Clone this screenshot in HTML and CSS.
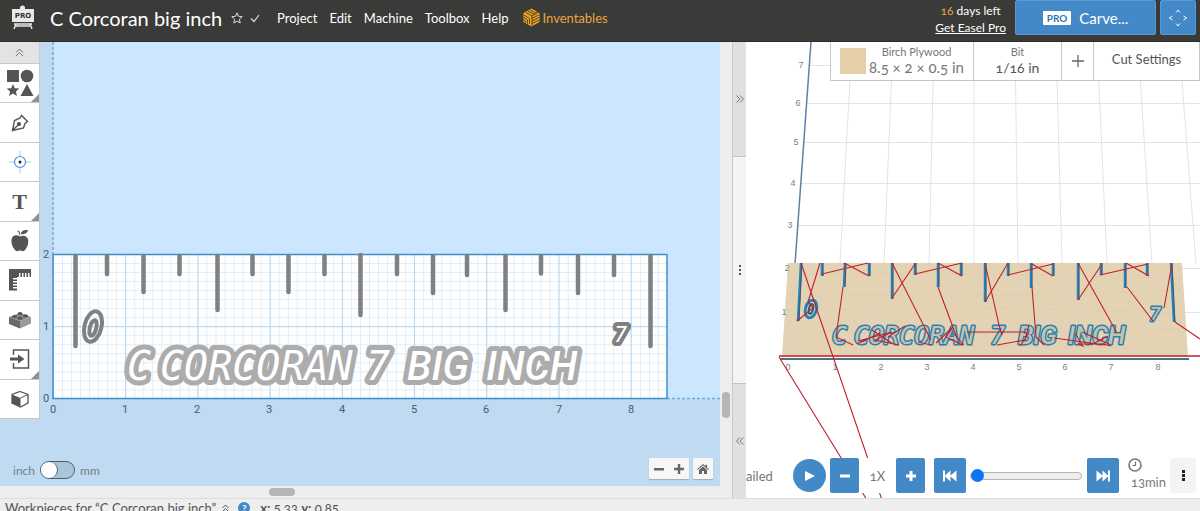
FILE: index.html
```html
<!DOCTYPE html>
<html lang="en">
<head>
<meta charset="utf-8">
<title>C Corcoran big inch</title>
<link rel="stylesheet" href="styles.css">
</head>
<body>
<header class="header">
  <svg class="logo" width="24" height="26" viewBox="0 0 24 26" role="img" aria-label="Pro">
    <path d="M9 4V2.500A2.500 2 0 0 1 14 2.500V4z" fill="#e8e8e8"/>
    <rect x="1" y="4" width="22" height="13" fill="#e8e8e8"/>
    <text class="logo-text" x="12" y="13">PRO</text>
    <path d="M3 19H21M5 19L3 24M19 19L21 24M5 21H19" stroke="#e8e8e8" stroke-width="1.500" fill="none"/>
  </svg>
  <h1 class="title">C Corcoran big inch</h1>
  <svg class="star" width="12" height="12" viewBox="0 0 12 12" fill="none" stroke="#ddd"><path d="M6 .9L7.500 4.300L11.200 4.700L8.400 7.200L9.200 11L6 9.100L2.800 11L3.600 7.200L.8 4.700L4.500 4.300Z"/></svg>
  <svg class="check" width="10" height="12" viewBox="0 0 10 12" fill="none" stroke="#ddd" stroke-width="1.200"><path d="M1 6.500L4 9.500L9 3"/></svg>
  <nav class="menu">
    <a href="#project">Project</a><a href="#edit">Edit</a><a href="#machine">Machine</a><a href="#toolbox">Toolbox</a><a href="#help">Help</a>
    <a href="#inventables" class="brand">
      <svg width="17" height="19" viewBox="0 0 17 19"><path d="M8.500 .5L16.500 5V14L8.500 18.500L.5 14V5Z" fill="#eba321"/><path d="M3 4.500L9 8L16 4M5 3.200L10 6L14 3.700M7 2L11 4.300M9 8V18M9 10.500L16 6.800M9 13L16 9.500M9 15.500L16 12M1 7L6.500 10.500V16M1 9.500L4.500 12V15.500M1 12L2.500 13V14.500" fill="none" stroke="#4a3c20" stroke-width=".9"/></svg>
      Inventables</a>
  </nav>
  <div class="trial"><div><span class="days">16</span> days left</div><a href="#pro">Get Easel Pro</a></div>
  <button class="carve"><span class="pro">PRO</span>Carve...</button>
  <button class="jog" aria-label="Jog machine"><svg width="18" height="18" viewBox="0 0 18 18" fill="none" stroke="#fff"><path d="M7 3.500L9 1L11 3.500M7 14.500L9 17L11 14.500M3.500 7L.5 9L3.500 11M14.500 7L17.500 9L14.500 11"/></svg></button>
</header>

<main class="workspace">
  <section class="editor">
    <svg class="scene" role="img" aria-label="Ruler design">
      <defs>
        <pattern id="fine" x="53" y="254" width="9.030" height="9.030" patternUnits="userSpaceOnUse"><path d="M0 0V9.030M0 0H9.030" stroke="#d9e7f1" stroke-width="1.400"/></pattern>
        <pattern id="inch" x="53" y="254" width="72.200" height="72.200" patternUnits="userSpaceOnUse"><path d="M0 0V72.200M0 0H72.200" stroke="#b4d7f3" stroke-width="2"/></pattern>
      </defs>
      <g transform="translate(0 -42)">
        <rect x="53" y="42" width="100%" height="357" fill="#cce6ff"/>
        <path d="M53 42V254M667 398.500H1600" stroke="#71addc" stroke-width="1.500" stroke-dasharray="3 2"/>
        <rect x="53" y="254" width="614" height="144" fill="#fdfeff"/>
        <rect x="53" y="254" width="614" height="144" fill="url(#fine)"/>
        <rect x="53" y="254" width="614" height="144" fill="url(#inch)"/>
        <rect x="53" y="254.500" width="614" height="144" fill="none" stroke="#438dc7" stroke-width="1.500"/>
        <path class="ticks" d="M75.500 256V346M107 256V274M143.500 256V292M179.500 256V274M217.500 256V310M252.500 256V274M288.500 256V292M324.500 256V274M360.500 255V315M397 256V274M433 256V293M467 256V275M505.500 256V310M541 256V273.500M578 256V293M614 256V275M650.500 256V346"/>
        <g class="lettering">
          <text x="127" y="380">C</text><text x="160" y="380">CORCORAN</text><text x="366" y="380">7</text><text class="narrow" x="407" y="380">BIG</text><text class="narrow" x="486" y="380">INCH</text>
        </g>
        <g class="digits">
          <ellipse cx="93" cy="326.500" rx="8.500" ry="15.500" transform="rotate(14 93 326.500)"/>
          <ellipse cx="93" cy="328" rx="3.200" ry="8" transform="rotate(14 93 328)"/>
          <text x="614" y="342">7</text>
        </g>
        <g class="axis">
          <text x="46" y="258">2</text><text x="46" y="330">1</text><text x="46" y="402">0</text>
          <text x="53" y="413">0</text><text x="125" y="413">1</text><text x="197" y="413">2</text><text x="269" y="413">3</text><text x="342" y="413">4</text><text x="414" y="413">5</text><text x="486" y="413">6</text><text x="559" y="413">7</text><text x="631" y="413">8</text>
        </g>
      </g>
    </svg>
    <div class="toolbar">
      <button class="collapse" aria-label="Collapse"><svg width="9" height="9" viewBox="0 0 9 9" fill="none" stroke="#777"><path d="M1 4.500L4.500 1L8 4.500M1 8L4.500 4.500L8 8"/></svg></button>
      <button class="more" aria-label="Shapes"><svg width="28" height="28" viewBox="0 0 28 28"><path d="M1 1H13V13H1zM7 15L8.800 19.200L13.300 19.600L9.900 22.500L11 27L7 24.600L3 27L4.100 22.500L.7 19.600L5.200 19.200zM21 15L27.500 27H14.500z"/><circle cx="21" cy="7" r="6.300"/></svg></button>
      <button aria-label="Pen"><svg width="18" height="18" viewBox="0 0 18 18" fill="none" stroke="#555" stroke-width="1.400"><path d="M1.500 16.500L3.500 6.500L9 4L10.500 1.500L16.500 7.500L14 9.500L12.500 14ZM2 16L7.500 10.500"/><circle cx="8" cy="10" r="1.400" fill="#555"/></svg></button>
      <button aria-label="Drill point"><svg width="22" height="22" viewBox="0 0 22 22" fill="none"><path d="M11 0V5M11 17V22M0 11H5M17 11H22" stroke="#a9c9e9"/><circle cx="11" cy="11" r="5.500" stroke="#4a90e0" stroke-width="1.200"/><circle cx="11" cy="11" r="1.500" fill="#222"/></svg></button>
      <button class="more letter" aria-label="Text">T</button>
      <button aria-label="Apps"><svg width="20" height="24" viewBox="0 0 22 26"><path d="M11 8C8 6 4 6 2.500 9C.5 13 2 20 6 23.500C8 25 9.500 23.500 11 23.500S14 25 16 23.500C19.500 20.500 21.500 13 19 9.500C17 6.500 13.500 6.700 11 8ZM10.500 7C10.500 5 9.500 3 8 2L9.500 1.500C11 3 11.300 5 11.200 7ZM12 5.500C12 2 15 .5 20 .8C19 4.500 15.500 6 12 5.500Z"/></svg></button>
      <button aria-label="Ruler"><svg width="22" height="22" viewBox="0 0 22 22"><path d="M0 0H22V8H20.500V4H19V8H17.500V4H16V8H14.500V4H13V8H11.500V4H10V8H8V9H4V10.500H8V12H4V13.500H8V15H4V16.500H8V18H4V19.500H8V21.500H0Z"/></svg></button>
      <button aria-label="Bricks"><svg width="22" height="18" viewBox="0 0 22 18"><path d="M0 6L11 2L22 6L11 10Z" fill="#8a8a8a"/><path d="M0 6L11 10V17.500L0 13Z" fill="#6a6a6a"/><path d="M11 10L22 6V12.500L11 17.500Z" fill="#9a9a9a"/><g fill="#555"><ellipse cx="5.500" cy="5.500" rx="2.500" ry="1.500"/><ellipse cx="11" cy="7.300" rx="2.500" ry="1.500"/><ellipse cx="11" cy="2.500" rx="2.500" ry="1.500"/><ellipse cx="16.500" cy="4.800" rx="2.500" ry="1.500"/></g></svg></button>
      <button class="more" aria-label="Import"><svg width="20" height="20" viewBox="0 0 20 20"><path d="M3.500 6V1H18.500V19H3.500V14" fill="none" stroke="#555" stroke-width="1.500"/><path d="M0 8.500H8V5.500L14.500 10L8 14.500V11.500H0z"/></svg></button>
      <button aria-label="Cube"><svg width="18" height="18" viewBox="0 0 18 18"><path d="M9 1.500L17 4.500V13L9.500 17L1 13V4.500Z" fill="#fff" stroke="#555" stroke-width="1.300"/><path d="M1 4.500L9.500 8V17L1 13Z"/><path d="M9.500 8L17 4.500" stroke="#555"/></svg></button>
    </div>
    <div class="units"><label for="unit">inch</label><input id="unit" class="switch" type="checkbox"><label for="unit">mm</label></div>
    <div class="zoom">
      <div class="pair"><button aria-label="Zoom out"><svg width="10" height="10" viewBox="0 0 10 10"><path d="M0 4H10V6.500H0z"/></svg></button><button aria-label="Zoom in"><svg width="10" height="10" viewBox="0 0 10 10"><path d="M0 3.800H3.800V0H6.200V3.800H10V6.200H6.200V10H3.800V6.200H0z"/></svg></button></div>
      <button class="home" aria-label="Home"><svg width="12" height="10" viewBox="0 0 12 10"><path d="M0 5.200L6 0L8.500 2.200V.8H10V3.500L12 5.200L11.300 6L6 1.500L.7 6ZM2 6L6 2.600L10 6V10H7V7H5V10H2Z"/></svg></button>
    </div>
  </section>
  <div class="vscroll"><div class="vthumb"></div></div>
  <div class="hscroll"><div class="hthumb"></div></div>
  <div class="splitter">
    <button aria-label="Expand design"><svg width="8" height="8" viewBox="0 0 8 8" fill="none" stroke="#777"><path d="M.5 .5L4 4L.5 7.500M4 .5L7.500 4L4 7.500"/></svg></button>
    <div class="grip"><i></i><i></i><i></i></div>
    <button aria-label="Expand preview"><svg width="8" height="8" viewBox="0 0 8 8" fill="none" stroke="#777"><path d="M4 .5L.5 4L4 7.500M7.500 .5L4 4L7.500 7.500"/></svg></button>
  </div>
  <section class="preview">
    <svg class="scene" role="img" aria-label="Toolpath preview">
      <g transform="translate(-746 -42)" fill="none">
        <path stroke="#dce5f2" d="M852 42L840 264M893 42L884 264M934 42L929 264M974 42L974 264M1015 42L1018 264M1056 42L1062 264M1097 42L1107 264M1138 42L1152 264M1179 42L1196 264M809 65.500H1200M807 103.500H1200M804 142.500H1200M801 183.500H1200M798 225.500H1200M1182 268.500H1200M1185 312.500H1200"/>
        <path stroke="#5b82a8" stroke-width="1.500" d="M811 42L795 264"/>
        <path fill="#e4d2b4" d="M788 263H1182L1188 357H782z"/>
        <path stroke="#dcc9a8" stroke-width=".5" d="M787 275Q930 270 1182 279M787 293Q940 300 1183 290M785 310Q980 304 1184 314M784 330Q960 338 1186 328M783 348Q960 342 1187 350"/>
        <g class="axis3d">
          <text x="801" y="68">7</text><text x="798" y="106">6</text><text x="796" y="145">5</text><text x="793" y="186">4</text><text x="790" y="228">3</text><text x="787" y="271">2</text><text x="784" y="315">1</text>
          <text x="788" y="370">0</text><text x="835" y="370">1</text><text x="881" y="370">2</text><text x="927" y="370">3</text><text x="973" y="370">4</text><text x="1019" y="370">5</text><text x="1065" y="370">6</text><text x="1111" y="370">7</text><text x="1158" y="370">8</text>
        </g>
        <path stroke="#4c6f88" stroke-width="2" d="M780 359H1189"/>
        <path stroke="#2583b8" stroke-width="2.500" d="M801 263L798 321M822 263V276M845 263L844 287M869 263V276M892 263V299M915 263V275M938 263V287M961 263V276M985 263V302M1008 263V276M1031 263V288M1053 263V276M1078 263V300M1101 263V275M1125 263V288M1147 263V276M1171 263L1174 322"/>
        <path stroke="#45576a" stroke-width="1" d="M802 263L799 321M823 263V276M846 263L845 287M870 263V276M893 263V299M916 263V275M939 263V287M962 263V276M986 263V302M1009 263V276M1032 263V288M1054 263V276M1079 263V300M1102 263V275M1126 263V288M1148 263V276M1172 263L1175 322"/>
        <g class="carved">
          <text x="832" y="344">C</text><text x="854" y="344">CORCORAN</text><text x="990" y="344">7</text><text class="narrow" x="1018" y="344">BIG</text><text class="narrow" x="1068" y="344">INCH</text>
          <text class="seven" x="1149" y="321">7</text>
        </g>
        <ellipse cx="811" cy="309" rx="5.500" ry="9" transform="rotate(15 811 309)" stroke="#2583b8" stroke-width="3"/>
        <ellipse cx="811" cy="309" rx="2" ry="5" transform="rotate(15 811 309)" stroke="#36566f" stroke-width="2"/>
        <path stroke="#c01f2e" stroke-width="1.100" d="M779 357L867 500M801 263L882 500M820 263L808 302L813 308L797 321M822 274L868 263M844 263L869 276M843 287L836 337L853 345M892 263L931 340M892 298L915 264M915 274L962 263M938 263L962 276M938 287L957 338M967 332H1026M985 263L999 325L1002 335M985 302L1008 263M1008 275L1053 264M1032 264L1053 276M1032 287L1036 337L1044 345M1078 263L1117 333M1078 300L1102 264M1100 275L1148 264M1126 263L1149 276M1127 287L1153 321M1172 264L1164 308M1175 322L1200 339M858 341L892 332L875 340L899 345M872 330L893 344M888 337L905 326M857 344L880 333M918 342L931 345M936 343L953 327L946 337L963 345M954 334L964 345M997 345L1025 340L1029 325M1020 346L1029 333M1054 338L1105 345M1075 333L1083 346L1078 344H1103L1111 346M1082 332L1109 344M1091 345L1108 336"/>
        <path stroke="#c01f2e" stroke-width="1.500" d="M779 356H1200"/>
      </g>
    </svg>
    <div class="settings">
      <button class="material"><span class="swatch"></span><span class="stack"><small>Birch Plywood</small><span class="size">8.5 × 2 × 0.5 in</span></span></button>
      <button class="stack bit"><small>Bit</small><span>1/16 in</span></button>
      <button class="add" aria-label="Add bit"><svg width="12" height="12" viewBox="0 0 12 12" stroke="#666" stroke-width="1.300"><path d="M6 0V12M0 6H12"/></svg></button>
      <button class="cut">Cut Settings</button>
    </div>
    <div class="player">
      <span class="quality">ailed</span>
      <button class="play" aria-label="Play"><svg width="10" height="12" viewBox="0 0 10 12"><path d="M0 1L10 6L0 11z"/></svg></button>
      <button class="blue" aria-label="Slower"><svg width="10" height="10" viewBox="0 0 10 10"><path d="M0 3.500H10V6.500H0z"/></svg></button>
      <span class="speed">1X</span>
      <button class="blue" aria-label="Faster"><svg width="10" height="10" viewBox="0 0 10 10"><path d="M0 3.500H3.500V0H6.500V3.500H10V6.500H6.500V10H3.500V6.500H0z"/></svg></button>
      <button class="blue wide" aria-label="To start"><svg width="14" height="12" viewBox="0 0 14 12"><path d="M0 .5H2V5.500L7.500 .5V5.500L13.500 .5V11.500L7.500 6.500V11.500L2 6.500V11.500H0z"/></svg></button>
      <input class="progress" type="range" min="0" max="100" value="0" aria-label="Progress">
      <button class="blue wide end" aria-label="To end"><svg width="14" height="12" viewBox="0 0 14 12"><path d="M14 .5H12V5.500L6.500 .5V5.500L.5 .5V11.500L6.500 6.500V11.500L12 6.500V11.500H14z"/></svg></button>
      <div class="time"><svg width="14" height="14" viewBox="0 0 14 14" fill="none" stroke="#777" stroke-width="1.600"><circle cx="7" cy="7" r="6"/><path d="M7.500 3.500V7.500H4.500" stroke-width="1.200"/></svg><span>13min</span></div>
      <button class="options" aria-label="Options"><svg width="3" height="11" viewBox="0 0 3 11"><path d="M0 0H3V3H0zM0 4H3V7H0zM0 8H3V11H0z"/></svg></button>
    </div>
  </section>
</main>
<footer class="status">
  <span>Workpieces for “C Corcoran big inch”</span>
  <svg width="7" height="8" viewBox="0 0 7 8" fill="none" stroke="#555"><path d="M.5 4L3.500 1L6.500 4M.5 7.500L3.500 4.500L6.500 7.500"/></svg>
  <button class="help" aria-label="Help">?</button>
  <span><b>x:</b> 5.33 <b>y:</b> 0.85</span>
</footer>
</body>
</html>
```
FILE: styles.css
```css
* { box-sizing: border-box; }
html, body { height: 100%; }
body { margin: 0; display: flex; flex-direction: column; overflow: hidden; font-family: Lato, "Open Sans", sans-serif; font-size: 14px; color: #555; font-variant-numeric: oldstyle-nums; }
button { font: inherit; color: inherit; border: 0; padding: 0; margin: 0; background: none; display: flex; align-items: center; justify-content: center; cursor: pointer; }
svg { display: block; flex: none; }

.header { flex: none; height: 42px; display: flex; align-items: center; padding: 0 4px 6px 11px; background: #3a3a38; border-bottom: 1px solid #2c2c2b; color: #fff; }
.logo-text { font: 700 7px "DejaVu Sans", sans-serif; fill: #333; text-anchor: middle; }
.title { margin: 0 9px 0 15px; font-size: 20px; font-weight: 400; line-height: 24px; white-space: nowrap; }
.check { margin-left: 7px; }
.menu { display: flex; align-items: center; gap: 12px; margin-left: 17px; font-size: 13px; white-space: nowrap; }
.menu a { color: #fff; text-decoration: none; }
.menu .brand { display: flex; align-items: center; gap: 3px; margin-left: 2px; color: #e8a540; }
.trial { margin-left: auto; margin-right: 9px; padding-top: 3px; text-align: center; font-size: 12px; line-height: 17px; white-space: nowrap; }
.trial a { color: #fff; }
.days { color: #e8a540; }
.carve, .jog { height: 35px; background: #4489c7; color: #fff; border: 1px solid #5a9ad2; border-radius: 2px; }
.carve { width: 141px; gap: 8px; font-size: 15px; margin-right: 4px; }
.pro { padding: 0 4px; background: #fff; color: #3477b0; border-radius: 1px; font-weight: 700; font-size: 10px; line-height: 14px; }
.jog { width: 36px; }

.workspace { flex: 1; min-height: 0; display: grid; grid-template-columns: 720fr 12px 14px 454fr; grid-template-rows: 1fr 12px; }
.editor { position: relative; grid-column: 1; grid-row: 1; background: #bfdaf1; overflow: hidden; }
.scene { width: 100%; height: 100%; }
.ticks { stroke: #808080; stroke-width: 4.5; stroke-linecap: round; }
.lettering { font: italic 400 40px "DejaVu Sans Mono", monospace; fill: #fff; stroke: #acacac; stroke-width: 10; stroke-linejoin: round; paint-order: stroke; }
.lettering .narrow { font: italic 500 40px Roboto, sans-serif; }
.digits { fill: none; stroke: #808080; stroke-width: 4; }
.digits text { font: italic 400 22px "DejaVu Sans Mono", monospace; fill: #fff; stroke-width: 8; stroke-linejoin: round; paint-order: stroke; }
.axis { font: 11px Roboto, sans-serif; fill: #3c6080; text-anchor: middle; }

.toolbar { position: absolute; left: 0; top: 0; width: 40px; height: 377px; display: grid; grid-template-rows: 22px repeat(9, 1fr); background: #fff; border-right: 1px solid #c5cdd4; }
.toolbar button { position: relative; border-bottom: 1px solid #c8c8c8; fill: #555; }
.toolbar .collapse { background: #e3e3e3; }
.more::after { content: ""; position: absolute; right: 0; bottom: 0; border-left: 8px solid transparent; border-bottom: 8px solid #909090; }
.toolbar .letter { font: 700 22px "Liberation Serif", serif; }
.units { position: absolute; left: 13px; bottom: 7px; display: flex; align-items: center; gap: 5px; font-size: 12px; color: #737f89; }
.switch { appearance: none; margin: 0; width: 35px; height: 18px; border: 1px solid #505f6a; border-radius: 9px; background: #a9c5da; }
.switch::before { content: ""; display: block; width: 16px; height: 16px; border-radius: 50%; background: #fff; border-right: 1px solid #505f6a; }
.zoom { position: absolute; right: 7px; bottom: 7px; display: flex; gap: 4px; fill: #666; }
.pair, .home { height: 21px; display: flex; background: #f7f7f7; border-radius: 1px; box-shadow: 0 1px 1px #9ab; }
.pair button, .home { width: 20px; }

.vscroll { grid-column: 2; grid-row: 1; background: #ededf0; padding: 350px 2px 0; }
.vthumb { height: 26px; border-radius: 4px; background: #b5b5b5; }
.hscroll { grid-column: 1 / 3; grid-row: 2; background: #ededed; padding: 2px 0 0 269px; }
.hthumb { width: 26px; height: 8px; border-radius: 4px; background: #b5b5b5; }
.splitter { grid-column: 3; grid-row: 1 / 3; display: grid; grid-template-rows: 1fr 2fr 1fr; background: #e0e0e0; border-left: 1px solid #c9c9c9; }
.grip { display: flex; flex-direction: column; gap: 2px; align-items: center; justify-content: center; background: #f4f4f4; border: solid #c4c4c4; border-width: 1px 0; }
.grip i { width: 2px; height: 2px; background: #555; }

.preview { position: relative; grid-column: 4; grid-row: 1 / 3; background: #fff; overflow: hidden; min-width: 0; }
.axis3d { font: 9px "Liberation Sans", sans-serif; fill: #76818c; text-anchor: middle; }
.carved { font: italic 400 25px "DejaVu Sans Mono", monospace; fill: #c9c2a8; stroke: #2681b3; stroke-width: 3; stroke-linejoin: round; paint-order: stroke; }
.carved .narrow { font: italic 500 25px Roboto, sans-serif; }
.carved .seven { font-size: 20px; }
.settings { position: absolute; right: 0; top: 0; display: grid; grid-template-columns: 142px 88px 32px 106px; height: 39px; background: #fff; border: solid #c4c4c4; border-width: 0 1px 1px; }
.settings > button + button { border-left: 1px solid #c4c4c4; }
.stack { display: flex; flex-direction: column; align-items: center; font-size: 14px; line-height: 17px; white-space: nowrap; }
.settings .stack { padding-bottom: 2px; }
.stack small { font-size: 11px; line-height: 15px; color: #777; }
.material { gap: 3px; }
.swatch { width: 26px; height: 26px; background: #e5cfa8; }
.size { font-size: 15px; color: #777; }
.cut { font-size: 13px; padding-bottom: 4px; }

.player { position: absolute; inset: auto 0 5px; height: 35px; display: flex; align-items: center; padding-right: 4px; background: #fff; fill: #fff; font-size: 13px; color: #777; }
.quality { width: 47px; flex: none; }
.play { flex: none; width: 33px; height: 33px; border-radius: 50%; background: #4489c7; margin-right: 4px; padding-left: 1px; }
.blue { flex: none; width: 29px; height: 35px; background: #4489c7; border-radius: 2px; }
.wide { width: 32px; }
.speed { flex: none; width: 37px; text-align: center; }
.blue + .wide { margin-left: 9px; }
.progress { appearance: none; flex: 1; min-width: 0; height: 14px; margin: 0 5px 0 4px; background: none; }
.progress::-webkit-slider-runnable-track { height: 8px; border: 1px solid #b5b5b5; border-radius: 4px; background: #efefef; }
.progress::-webkit-slider-thumb { appearance: none; width: 13px; height: 13px; margin-top: -4px; border-radius: 50%; background: #0b76f5; }
.time { flex: none; width: 38px; margin-left: 9px; margin-right: 4px; }
.time span { display: block; text-align: right; line-height: 21px; }
.options { flex: none; width: 26px; height: 35px; background: #f4f4f4; fill: #222; border-radius: 2px; }

.status { flex: none; height: 13px; display: flex; align-items: flex-start; gap: 6px; padding: 0 5px; overflow: hidden; background: #eee; border-top: 1px solid #ddd; font-size: 13px; line-height: 18px; white-space: nowrap; }
.status svg { margin-top: 5px; }
.status span:last-child { margin-left: 4px; }
.help { flex: none; width: 12px; height: 12px; margin: 3px 0 0 3px; border-radius: 50%; background: #4489c7; color: #fff; font-size: 10px; font-weight: 700; line-height: 12px; }
```
